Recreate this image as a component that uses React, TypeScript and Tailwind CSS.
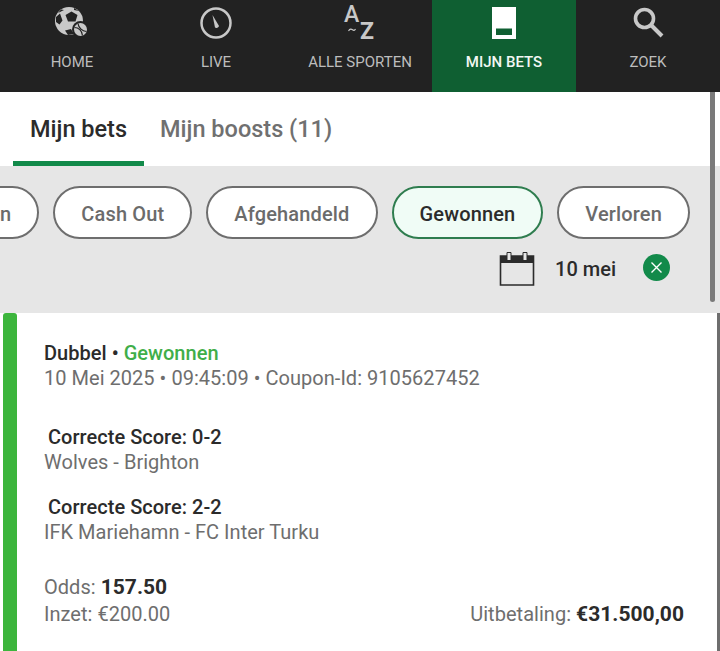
const FONT = "font-['Roboto',sans-serif]";

const HomeIcon = () => (
  <svg width="34" height="31" viewBox="0 0 34 31">
    <circle cx="14" cy="14" r="14" fill="#c8c8c8" />
    <path d="M10.500 8l6-3.500 6 3.500-2 6.500h-7.500zM1 10l4-3.500 2.500 7-3 4-3.500-2.500zM10 23.500l6-1.500 3 5-6 1zM3 6l3-3.500 3 .5zM19 1l5 3-5-1z" fill="#222" />
    <circle cx="25.500" cy="22.500" r="8.500" fill="#222" />
    <circle cx="25.500" cy="22.500" r="6.500" fill="#c8c8c8" />
    <path d="M19.500 20.500c4 0 7.500 3 8 8M23 16.500c.5 4 4 7.500 8.500 8" fill="none" stroke="#222" strokeWidth="1.2" />
  </svg>
);

const LiveIcon = () => (
  <svg width="32" height="32" viewBox="0 0 32 32">
    <circle cx="16" cy="16" r="14.500" fill="none" stroke="#c8c8c8" strokeWidth="2.500" />
    <path d="M12.500 8l6.500 11a2.600 2.600 0 0 1-4 1.500z" fill="#c8c8c8" />
  </svg>
);

const SportsIcon = () => (
  <div className="relative h-[34px] w-[32px] text-[#c8c8c8]">
    <span className="absolute left-0 top-[-4px] text-[23px] font-medium leading-[24px]">A</span>
    <svg className="absolute left-[4px] top-[21px]" width="8" height="4" viewBox="0 0 8 4">
      <path d="M.5 3c1.500-2.500 3-2 4-1.200s2 1 3-.8" fill="none" stroke="#c8c8c8" strokeWidth="1.100" />
    </svg>
    <span className="absolute left-[16px] top-[13px] text-[23px] font-bold leading-[24px]">Z</span>
  </div>
);

const BetsIcon = () => (
  <svg width="24" height="32" viewBox="0 0 24 32">
    <path d="M0 0h24v32H0z" fill="#fff" />
    <path d="M4 21.500h16v6.500H4z" fill="#0f5f32" />
  </svg>
);

const ZoekIcon = () => (
  <svg width="31" height="31" viewBox="0 0 31 31">
    <circle cx="11.500" cy="11.500" r="9" fill="none" stroke="#c8c8c8" strokeWidth="3.600" />
    <path d="M18 18l11 11" stroke="#c8c8c8" strokeWidth="4" />
  </svg>
);

const NAV_ITEMS = [
  { label: "HOME", icon: <HomeIcon /> },
  { label: "LIVE", icon: <LiveIcon /> },
  { label: "ALLE SPORTEN", icon: <SportsIcon /> },
  { label: "MIJN BETS", icon: <BetsIcon />, active: true },
  { label: "ZOEK", icon: <ZoekIcon /> },
];

const PILLS = ["Open", "Cash Out", "Afgehandeld", "Gewonnen", "Verloren"];

const CalendarIcon = () => (
  <svg width="36" height="36" viewBox="0 0 36 36">
    <path d="M1.500 5h33v7h-33z" fill="#2b2b2b" />
    <path d="M1.500 5h33v29h-33z" fill="none" stroke="#2b2b2b" strokeWidth="1.600" />
    <path d="M8 1.500h4v8H8zM24 1.500h4v8h-4z" fill="#e6e6e6" stroke="#2b2b2b" strokeWidth="1" />
  </svg>
);

export default function App() {
  return (
    <div className={`${FONT} relative h-[651px] w-[720px] overflow-hidden bg-white`}>
      {/* Top nav */}
      <nav className="flex h-[92px] bg-[#222222]">
        {NAV_ITEMS.map((item) => (
          <div
            key={item.label}
            className={`flex w-[144px] flex-col items-center ${item.active ? "bg-[#0f5f32] font-medium text-[#f2f7f3]" : "text-[#bdbdbd]"}`}
          >
            <div className="flex h-[52px] w-full items-start justify-center pt-[7px]">{item.icon}</div>
            <span className="mt-[1px] text-[15px] leading-[18px]">{item.label}</span>
          </div>
        ))}
      </nav>

      {/* Tabs */}
      <div className="flex h-[74px] pl-[13px]">
        <div className="flex w-[131px] items-start justify-center border-b-[5px] border-[#128a4a] pt-[22px] text-[23.500px] font-medium leading-[30px] text-[#2b2b2b]">
          Mijn bets
        </div>
        <div className="ml-[16px] pt-[22px] text-[23.500px] font-medium leading-[30px] text-[#707070]">
          Mijn boosts (11)
        </div>
      </div>

      {/* Filters */}
      <div className="h-[147px] bg-[#e6e6e6] pt-[20px]">
        <div className="flex justify-end gap-[14px] overflow-hidden pr-[30px]">
          {PILLS.map((pill) => (
            <div
              key={pill}
              className={`flex h-[53px] shrink-0 items-center justify-center rounded-full border-2 px-[26px] pt-[2px] text-[20px] font-medium tracking-[0.15px] ${pill === "Gewonnen" ? "border-[#2f7d4f] bg-[#f0fcf6] text-[#2b2b2b]" : "border-[#6e6e6e] bg-white text-[#6b6b6b]"}`}
            >
              {pill}
            </div>
          ))}
        </div>
        <div className="mt-[12px] flex items-center justify-end pr-[50px]">
          <CalendarIcon />
          <span className="ml-[20px] text-[20px] font-medium text-[#2b2b2b]">10 mei</span>
          <span className="ml-[27px] mb-[4px] flex h-[27px] w-[27px] items-center justify-center rounded-full bg-[#128a4a]">
            <svg width="13" height="13" viewBox="0 0 13 13">
              <path d="M1.500 1.500l10 10M11.500 1.500l-10 10" stroke="#fff" strokeWidth="1.400" />
            </svg>
          </span>
        </div>
      </div>

      {/* Bet card */}
      <div className="flex h-[338px] pl-[3px] pr-[36px]">
        <div className="w-[14px] shrink-0 rounded-t-[3px] bg-[#3cb53c]" />
        <div className="flex-1 pl-[27px] pt-[28px] text-[20px] leading-[25px] tracking-[0.03px] text-[#6e6e6e]">
          <div className="font-medium text-[#2b2b2b]">
            Dubbel • <span className="text-[#3fae49]">Gewonnen</span>
          </div>
          <div>10 Mei 2025 • 09:45:09 • Coupon-Id: 9105627452</div>

          <div className="mt-[34px] pl-[4px] font-medium text-[#2b2b2b]">Correcte Score: 0-2</div>
          <div>Wolves - Brighton</div>

          <div className="mt-[20px] pl-[4px] font-medium text-[#2b2b2b]">Correcte Score: 2-2</div>
          <div>IFK Mariehamn - FC Inter Turku</div>

          <div className="mt-[30px]">
            Odds: <span className="text-[21px] font-bold text-[#2b2b2b]">157.50</span>
          </div>
          <div className="mt-[2px] flex justify-between">
            <span>Inzet: €200.00</span>
            <span>
              Uitbetaling: <span className="text-[21px] font-bold text-[#2b2b2b]">€31.500,00</span>
            </span>
          </div>
        </div>
      </div>

      {/* Overlay scrollbars */}
      <div className="absolute left-[710px] top-[92px] h-[210px] w-[5px] rounded-b-full bg-[#7a7a7a]" />
      <div className="absolute left-[717px] top-[313px] h-[338px] w-[3px] bg-[#6e6e6e]" />
    </div>
  );
}
